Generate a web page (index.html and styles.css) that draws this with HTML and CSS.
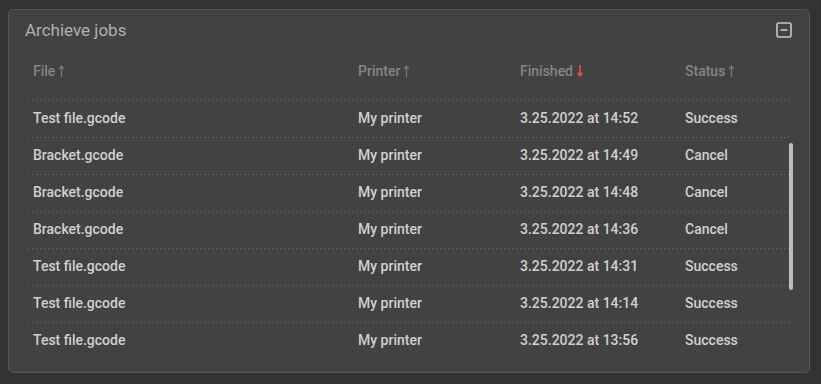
FILE: index.html
```html
<!DOCTYPE html>
<html>
<head>
<meta charset="utf-8">
<link rel="stylesheet" href="styles.css">
</head>
<body>
<div class="card">
  <div class="card-head">
    <div class="title">Archieve jobs</div>
    <svg class="min-icon" width="16" height="16" viewBox="0 0 16 16">
      <rect x="1" y="1" width="14" height="14" rx="1.5" fill="none" stroke="#c8c8c8" stroke-width="1.6"/>
      <rect x="4.5" y="7.2" width="7" height="1.6" fill="#c8c8c8"/>
    </svg>
  </div>
  <div class="table">
    <div class="row head">
      <div class="c c1">File <svg class="arr" width="5" height="12" viewBox="0 0 5 12"><path d="M2.5 1.5V12" stroke="#7a7a7a" stroke-width="1.3"/><path d="M0.3 4.2L2.5 1L4.7 4.2" fill="none" stroke="#7a7a7a" stroke-width="1.2"/></svg></div>
      <div class="c c2">Printer <svg class="arr" width="5" height="12" viewBox="0 0 5 12"><path d="M2.5 1.5V12" stroke="#7a7a7a" stroke-width="1.3"/><path d="M0.3 4.2L2.5 1L4.7 4.2" fill="none" stroke="#7a7a7a" stroke-width="1.2"/></svg></div>
      <div class="c c3">Finished <svg class="arr" width="6" height="12" viewBox="0 0 6 12"><path d="M3 0V10.5" stroke="#ef4a3c" stroke-width="1.7"/><path d="M0.6 7.8L3 11L5.4 7.8" fill="none" stroke="#ef4a3c" stroke-width="1.5"/></svg></div>
      <div class="c c4">Status <svg class="arr" width="5" height="12" viewBox="0 0 5 12"><path d="M2.5 1.5V12" stroke="#7a7a7a" stroke-width="1.3"/><path d="M0.3 4.2L2.5 1L4.7 4.2" fill="none" stroke="#7a7a7a" stroke-width="1.2"/></svg></div>
    </div>
    <div class="row"><div class="c c1">Test file.gcode</div><div class="c c2">My printer</div><div class="c c3">3.25.2022 at 14:52</div><div class="c c4">Success</div></div>
    <div class="row"><div class="c c1">Bracket.gcode</div><div class="c c2">My printer</div><div class="c c3">3.25.2022 at 14:49</div><div class="c c4">Cancel</div></div>
    <div class="row"><div class="c c1">Bracket.gcode</div><div class="c c2">My printer</div><div class="c c3">3.25.2022 at 14:48</div><div class="c c4">Cancel</div></div>
    <div class="row"><div class="c c1">Bracket.gcode</div><div class="c c2">My printer</div><div class="c c3">3.25.2022 at 14:36</div><div class="c c4">Cancel</div></div>
    <div class="row"><div class="c c1">Test file.gcode</div><div class="c c2">My printer</div><div class="c c3">3.25.2022 at 14:31</div><div class="c c4">Success</div></div>
    <div class="row"><div class="c c1">Test file.gcode</div><div class="c c2">My printer</div><div class="c c3">3.25.2022 at 14:14</div><div class="c c4">Success</div></div>
    <div class="row"><div class="c c1">Test file.gcode</div><div class="c c2">My printer</div><div class="c c3">3.25.2022 at 13:56</div><div class="c c4">Success</div></div>
  </div>
  <div class="scroll-thumb"></div>
</div>
</body>
</html>
```
FILE: styles.css
```css
* { box-sizing: border-box; }
html, body { margin: 0; padding: 0; }
body {
  background: #323232;
  font-family: Roboto, "Liberation Sans", sans-serif;
  padding: 9px 11px 11px 8px;
  width: 821px;
  height: 384px;
  overflow: hidden;
}
.card {
  position: relative;
  width: 802px;
  height: 364px;
  background: #424242;
  border: 1px solid #575757;
  border-radius: 5px;
  padding: 10px 17px 0 16px;
}
.card-head {
  display: flex;
  justify-content: space-between;
  align-items: center;
  height: 20px;
}
.title {
  color: #b0b0b0;
  font-size: 17px;
  line-height: 20px;
}
.min-icon { display: block; }
.table {
  margin-left: 3px;
  width: 763px;
}
.row {
  display: flex;
  height: 37px;
  align-items: center;
  padding-bottom: 2px;
  background: linear-gradient(to right, #6e6e6e 1px, transparent 1px) 0 0 / 4px 1px repeat-x;
  font-size: 14px;
  font-weight: 500;
  color: #d0d0d0;
}
.row.head {
  height: 60px;
  background: none;
  align-items: flex-start;
  padding-top: 23px;
  padding-bottom: 0;
  color: #858585;
}
.row.head .c { line-height: 16px; display: flex; align-items: center; gap: 4px; }
.c { padding-left: 5px; line-height: 16px; white-space: nowrap; }
.c1 { width: 325px; }
.c2 { width: 162px; }
.c3 { width: 165px; }
.c4 { flex: 1; }
.arr { display: block; }
.scroll-thumb {
  position: absolute;
  left: 780px;
  top: 133px;
  width: 4px;
  height: 147px;
  border-radius: 2px;
  background: #bdbdbd;
}
```
